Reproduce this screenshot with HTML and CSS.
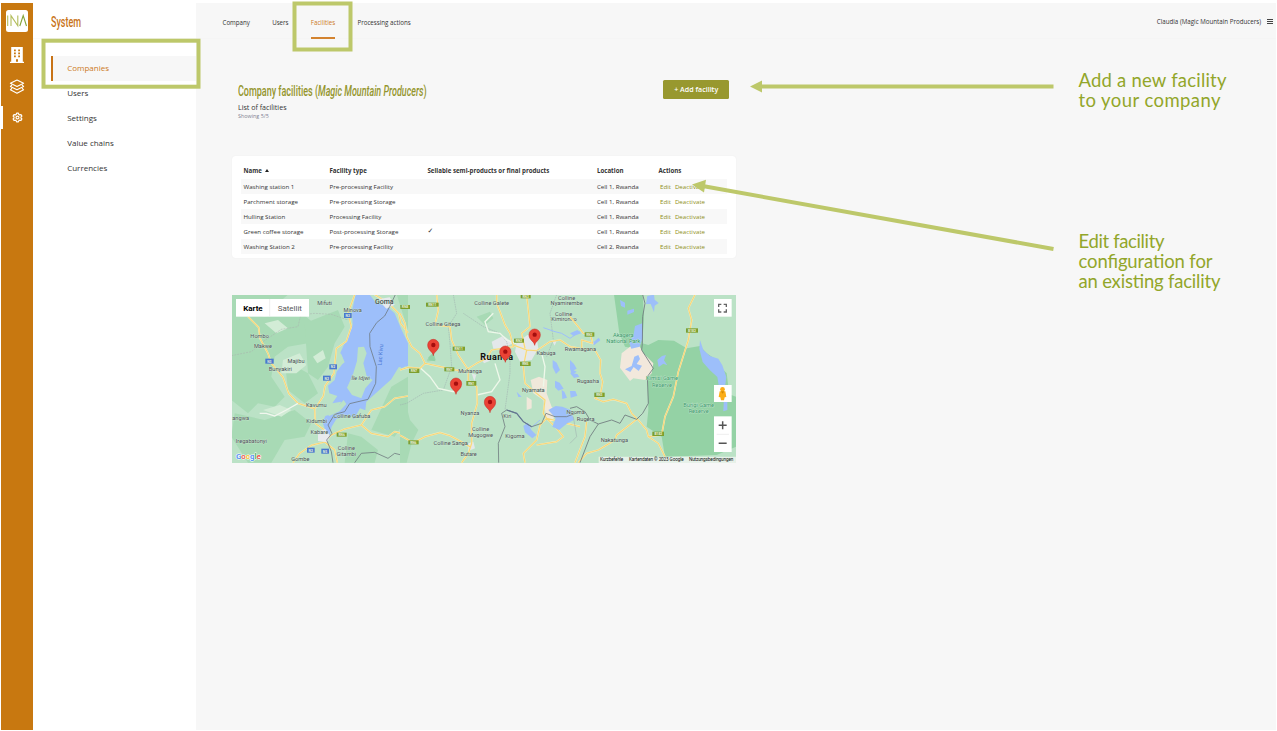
FILE: index.html
```
<!DOCTYPE html>
<html lang="en">
<head>
<meta charset="utf-8">
<title>Company facilities</title>
<link rel="stylesheet" href="styles.css">
</head>
<body>
<div class="app">
  <nav class="rail">
    <div class="logo"><svg viewBox="0 0 22 22" width="22" height="22" fill="none" stroke="#b3bd5c" stroke-width="1.1"><path d="M1.7 5.5V16M5 16V5.6L11.8 15.8V5.5"/><path d="M13.8 16L17.2 5.6L20.5 16" stroke="#82a43a"/></svg></div>
    <div class="rail-item"><svg viewBox="0 0 14 17" width="14" height="17"><path fill="#fff" fill-rule="evenodd" d="M1.2 0h11.6v14.8H14V16H0v-1.200h1.200zM4 2.500v1.700h1.800V2.500zM8.200 2.500v1.700H10V2.500zM4 5.500v1.700h1.800V5.500zM8.200 5.500v1.700H10V5.500zM4 8.500v1.700h1.800V8.500zM8.200 8.500v1.700H10V8.500zM6 12.200v2.600h2v-2.600z"/></svg></div>
    <div class="rail-item"><svg viewBox="0 0 16 16" width="16" height="16" fill="none" stroke="#fff" stroke-width="1.100" stroke-linejoin="round"><path d="M8 1L14.600 4.200L8 7.400L1.400 4.200ZM3 6L1.400 7.400L8 10.800L14.600 7.400L13 6M3 9.200L1.400 10.800L8 14.300L14.600 10.800L13 9.200"/></svg></div>
    <div class="rail-item active"><svg viewBox="0 0 12 12" width="11" height="11" fill="none" stroke="#fff" stroke-width="1.300" stroke-linejoin="round"><path d="M5 1.200h2l.4 1.400 1 .6 1.400-.4 1 1.700-1 1v1.100l1 1-1 1.700-1.400-.4-1 .6-.4 1.300H5l-.4-1.300-1-.6-1.400.4-1-1.700 1-1V5.500l-1-1 1-1.700 1.400.4 1-.6z"/><circle cx="6" cy="6" r="1.600"/></svg></div>
  </nav>
  <aside class="sidebar">
    <h2 class="side-title"><span>System</span></h2>
    <ul class="menu">
      <li class="current">Companies</li>
      <li>Users</li>
      <li>Settings</li>
      <li>Value chains</li>
      <li>Currencies</li>
    </ul>
  </aside>
  <main class="main">
    <header class="topbar">
      <div class="tabs"><span>Company</span><span>Users</span><span class="selected">Facilities</span><span>Processing actions</span></div>
      <div class="account"><span>Claudia (Magic Mountain Producers)</span><i class="burger"></i></div>
    </header>
    <section class="content">
      <div class="heading">
        <div>
          <h1>Company facilities (<em>Magic Mountain Producers</em>)</h1>
          <p class="subtitle">List of facilities</p>
          <p class="count">Showing 5/5</p>
        </div>
        <button class="add">+ Add facility</button>
      </div>
      <div class="card">
        <div class="row head"><span>Name <i class="sort"></i></span><span>Facility type</span><span>Sellable semi-products or final products</span><span>Location</span><span>Actions</span></div>
        <div class="row odd"><span>Washing station 1</span><span>Pre-processing Facility</span><span></span><span>Cell 1, Rwanda</span><span class="links"><a>Edit</a><a>Deactivate</a></span></div>
        <div class="row"><span>Parchment storage</span><span>Pre-processing Storage</span><span></span><span>Cell 1, Rwanda</span><span class="links"><a>Edit</a><a>Deactivate</a></span></div>
        <div class="row odd"><span>Hulling Station</span><span>Processing Facility</span><span></span><span>Cell 1, Rwanda</span><span class="links"><a>Edit</a><a>Deactivate</a></span></div>
        <div class="row"><span>Green coffee storage</span><span>Post-processing Storage</span><span class="tick">✓</span><span>Cell 1, Rwanda</span><span class="links"><a>Edit</a><a>Deactivate</a></span></div>
        <div class="row odd"><span>Washing Station 2</span><span>Pre-processing Facility</span><span></span><span>Cell 2, Rwanda</span><span class="links"><a>Edit</a><a>Deactivate</a></span></div>
      </div>
      <svg class="map" viewBox="232 295 504 168" width="504" height="168">
        <defs>
          <g id="pin"><path d="M0 0C-1-12-17-15-17-32a17 17 0 0 1 34 0C17-15 1-12 0 0Z" fill="#ea4335" stroke="#c5221f" stroke-width="1.500"/><circle cy="-32" r="6.500" fill="#a50e0e"/></g>
        </defs>
        <rect x="231" y="294" width="506" height="170" fill="#bbe2c6"/>
        <!-- west: Lake Kivu -->
        <g transform="translate(228 290) scale(.33333)">
          <g fill="#a8dab5">
            <path d="M10 60L110 80 210 60 270 110 240 160 180 170 140 200 130 260 170 320 140 350 90 340 60 370 10 330Z"/>
            <path d="M230 100L330 60 350 110 320 160 300 230 270 270 240 250ZM10 14H180L150 40 10 100ZM170 210L240 250 270 310 230 340 180 300ZM20 370L110 390 200 360 250 400 230 440 170 450 130 518H60L10 440ZM360 430L400 440 450 480 440 518H350Z"/>
            <path d="M490 290L540 260V380L500 440 430 420ZM505 10H540V120Z"/>
          </g>
          <g fill="#d2ecd6"><path d="M110 100l40-10 30 25-35 15zM165 210l50-20 20 35-30 25-45 0zM105 360l50-15 35 15-30 20zM255 200l30-20 8 25-25 15z"/></g>
          <path fill="#9dbffa" d="M383 14L372 62 374 105 352 155 337 188 348 215 326 245 320 270 300 287 304 310 328 318 313 340 340 335 322 368 292 378 284 398 292 420 304 438 311 410 325 387 365 373 378 388 396 355 412 361 415 335 450 304 490 268 512 232 540 228V160L520 118 500 70 478 50 444 38 425 14Z"/>
          <path fill="#bbe2c6" d="M390 172l18-2 8 20-10 30 10 38 18 12-22 25-12 30-28-10-15-22 18-40 12-40zM326 188l14 5 10 24-20 15-15-8zM297 370l25-12 25-28 8 12-20 22-32 14z"/>
          <path fill="none" stroke="#a7afad" stroke-width="1.500" stroke-dasharray="6 3" d="M10 197L70 185 105 155 160 118 210 110 218 75 260 70 310 73 360 90 372 60"/>
          <path class="road-case" d="M60 80L92 112 96 145 120 190 130 220 165 262 182 310 210 340 260 356 262 400 289 420 290 456 250 466 215 490 195 518M380 14L360 70 370 110 355 154 325 175 318 250 291 288 286 318 262 355M440 14L480 38 512 70 518 100 540 128M540 318L500 325 470 350 430 360 400 405 350 417 310 435 290 456 320 480 328 518M400 405L430 430 480 440 500 425 540 435"/>
          <path class="road-core" d="M60 80L92 112 96 145 120 190 130 220 165 262 182 310 210 340 260 356 262 400 289 420 290 456 250 466 215 490 195 518M380 14L360 70 370 110 355 154 325 175 318 250 291 288 286 318 262 355M440 14L480 38 512 70 518 100 540 128M540 318L500 325 470 350 430 360 400 405 350 417 310 435 290 456 320 480 328 518M400 405L430 430 480 440 500 425 540 435"/>
          <path fill="#e8eaed" d="M270 425l22-8 14 20-8 20-28-4zM450 28l35-6 15 22-25 12z"/>
          <path fill="none" stroke="#f1f6ee" stroke-width="4" d="M95 370L115 370 140 378 175 360 210 340"/>
          <path fill="none" stroke="#6d777c" stroke-width="2.300" d="M502 14L485 50 470 78 446 98 425 130 426 170 445 230 443 280 420 328 365 341 350 365 320 373 300 405 312 430 296 450 310 485 315 518M380 518L400 490 440 487 480 505 500 490 540 500"/>
          <g class="blue"><rect x="348" y="69" width="23" height="15"/><rect x="304" y="223" width="23" height="15"/><rect x="285" y="257" width="23" height="15"/><rect x="112" y="206" width="25" height="15"/><rect x="237" y="473" width="23" height="15"/><rect x="280" y="476" width="23" height="15"/></g>
          <g class="green"><rect x="326" y="428" width="30" height="12"/></g>
          <g class="shield"><text x="359" y="81">N2</text><text x="315" y="235">N2</text><text x="296" y="269">N2</text><text x="124" y="218">N3</text><text x="248" y="485">N2</text><text x="291" y="488">N5</text><text x="341" y="438">RN6</text></g>
          <g class="place"><text x="290" y="45">Mifuti</text><text x="374" y="65">Minova</text><text x="95" y="143">Hombo</text><text x="105" y="173">Makwe</text><text x="204" y="220">Majibu</text><text x="157" y="243">Bunyakiri</text><text x="398" y="270" font-style="italic">Île Idjwi</text><text x="265" y="352">Kavumu</text><text x="266" y="399">Kidumbi</text><text x="274" y="431">Kabare</text><text x="372" y="384">Colline Gafuba</text><text x="38" y="391">angwa</text><text x="70" y="460">Iregabatonyi</text><text x="355" y="480">Colline</text><text x="355" y="497">Gitambi</text><text x="217" y="513">Gombe</text><text x="469" y="43" class="town">Goma</text></g>
          <text class="water" transform="translate(463 195) rotate(-85)">Lac Kivu</text>
        </g>
        <!-- centre: Rwanda -->
        <g transform="translate(400 290) scale(.33333)">
          <path fill="#a8dab5" d="M0 340L20 350 30 390 55 420 35 460 20 518H0ZM80 210l20-20 8 20-25 5zM230 80l40-15 10 20-25 20z"/>
          <path fill="#95d3a7" d="M85 202l15-14 3 10 3 16-20-3z"/>
          <path fill="#9dbffa" d="M0 155L16 190 22 225 5 235 0 230Z"/>
          <path fill="#e4e8ea" d="M275 155l35-18 30 22-30 15-30 2zM350 160l32-25 28 10 5 30-20 35-35 5-15-30zM240 200l25 0 5 12-18 8zM215 250l14 4-6 20zM205 460l15-5 5 20-20 8zM455 150l14 5-5 12z"/>
          <path fill="#f0e8da" d="M392 270l25-10 25 10-2 40 15 40 10 10-5 30-20 0-10-60-30-20zM380 320l15 10 0 25-15 5z"/>
          <path fill="none" stroke="#9cabac" stroke-width="1.500" stroke-dasharray="5 2" d="M160 14L170 70 145 110 150 160 155 230 130 300 70 310 20 340 0 345M190 70L250 110 300 130 320 155 330 200 330 250 315 360M470 14L450 70 460 150 440 200"/>
          <path fill="none" stroke="#eef8ea" stroke-width="4" d="M62 235L90 260 115 295 160 305 185 285M230 315L275 305 300 270 285 220M350 162L320 150 300 130 265 125 255 95 280 70M425 190L435 230 430 290"/>
          <path class="road-case" d="M0 70L15 100 20 140 35 170 60 190 75 220 130 232 190 245 230 220 260 205 275 180 340 170 330 130 315 105 300 65 290 40 290 14M110 14L115 60 105 105 150 110 155 150 175 195 205 240 205 270 230 290 232 340 215 400 215 460 205 490 185 518M0 240L25 232 60 235 75 220M0 436L40 458 75 440 120 428 150 437 180 453 210 470M340 165L380 180 410 182 450 155 480 150 510 170 540 175M375 175L365 130 390 110 385 60 380 14M380 180L370 230 375 280 410 310 435 330 430 370 440 385M440 385L420 405 410 450 370 490 375 518M440 385L470 415 490 440 470 455 410 465M440 385L540 410"/>
          <path class="road-core" d="M0 70L15 100 20 140 35 170 60 190 75 220 130 232 190 245 230 220 260 205 275 180 340 170 330 130 315 105 300 65 290 40 290 14M110 14L115 60 105 105 150 110 155 150 175 195 205 240 205 270 230 290 232 340 215 400 215 460 205 490 185 518M0 240L25 232 60 235 75 220M0 436L40 458 75 440 120 428 150 437 180 453 210 470M340 165L380 180 410 182 450 155 480 150 510 170 540 175M375 175L365 130 390 110 385 60 380 14M380 180L370 230 375 280 410 310 435 330 430 370 440 385M440 385L420 405 410 450 370 490 375 518M440 385L470 415 490 440 470 455 410 465M440 385L540 410"/>
          <path fill="#9dbffa" d="M370 408l14-10 10 22 15 15-12 10-22-18zM445 360l22-12 20 2 25 10 10 30-20 10-25 20-20-10 10-25zM458 210l12 8 10 22-12 12-10-20zM465 272l14 6 12 18-16 6-10-10zM510 235l20 10-15 10zM485 300l8 5 8 18-14 4zM365 320l-15-15 5 16z"/>
          <path fill="none" stroke="#9dbffa" stroke-width="3" d="M430 113L465 125 485 130 510 145 540 125M395 412L420 390"/>
          <path fill="none" stroke="#5b75a8" stroke-width="3.500" d="M320 360L350 370 370 395 395 410"/>
          <path fill="none" stroke="#6d777c" stroke-width="2.300" d="M296 518L295 460 315 410 305 370 320 360 350 370 370 395 395 410 425 400 438 370 465 380 500 380 540 365"/>
          <g class="green"><rect x="1" y="45" width="29" height="12"/><rect x="78" y="38" width="38" height="12"/><rect x="158" y="170" width="37" height="12"/><rect x="362" y="13" width="30" height="12"/><rect x="342" y="146" width="30" height="12"/><rect x="360" y="215" width="32" height="13"/><rect x="27" y="236" width="31" height="13"/><rect x="133" y="232" width="30" height="12"/><rect x="199" y="273" width="30" height="14"/><rect x="25" y="451" width="31" height="12"/></g>
          <g class="shield"><text x="15" y="55">RN8</text><text x="97" y="48">RN11</text><text x="176" y="180">RN11</text><text x="377" y="24">RN3</text><text x="357" y="156">RN3</text><text x="376" y="225">RN5</text><text x="42" y="246">RN7</text><text x="148" y="242">RN7</text><text x="214" y="284">RN1</text><text x="40" y="461">RN6</text></g>
          <g class="place"><text x="275" y="45">Colline Galete</text><text x="500" y="29">Colline</text><text x="500" y="45">Nyamirembe</text><text x="491" y="77">Colline</text><text x="492" y="94">Kimironko</text><text x="129" y="109">Colline Gitega</text><text x="438" y="195">Kabuga</text><text x="210" y="248">Muhanga</text><text x="400" y="307">Nyamata</text><text x="210" y="376">Nyanza</text><text x="322" y="384">Kiri</text><text x="242" y="424">Colline</text><text x="242" y="440">Mugogwe</text><text x="345" y="445">Kigoma</text><text x="152" y="465">Colline Sanga</text><text x="206" y="497">Butare</text></g>
          <text x="290" y="210" class="country" textLength="98">Ruanda</text>
          <use href="#pin" x="100" y="197"/><use href="#pin" x="404" y="166"/><use href="#pin" x="316" y="217"/><use href="#pin" x="168" y="313"/><use href="#pin" x="270" y="368"/>
        </g>
        <!-- east: Akagera and reserves -->
        <g transform="translate(570 290) scale(.33333)">
          <path fill="#94d2a5" d="M132 14H218L222 80 217 160 235 165 265 150 312 152 350 175 390 168 410 190 440 210 450 230 470 250 475 290 470 310 498 320V470L440 495 285 500 275 440 230 410 235 360 232 250 215 180 165 170 148 130Z"/>
          <path fill="#f2e8dc" d="M155 190l25-20 25-8 15 28 30 30-5 30-20 20-35-5-10 8-30-40z"/>
          <path fill="#9dbffa" d="M195 108l22-8 2 40-10 30-25 6-8-22 14-15zM165 238l20-10 8-28 12-5 5 12-10 15 16 5-10 16-15-12-10 15zM150 30l15 8 0 15-12-5zM172 62l20-6 0 10-20 8zM232 18l20-4 2 15 12 10-12 8-2 20-10-25-14 0zM262 210l14-12 12-3-6 16 10 15-12-5-14 10zM390 150l10 30 20 18 25 8 12 20 12 35-4 30-18 0-5-30-22-20-22-25-10-40zM462 320l10 0 0 40-12 4z"/>
          <g fill="#9dbffa"><path d="M0 210l12 12 8 14-12 6-8-5zM0 248l22 4 6 8-16 4zM0 130l22-10 12 10-24 8zM60 155l12 0 14-12 5 8-18 14zM0 303l16 0 6 14-20 6z"/></g>
          <path class="road-case" d="M0 80L25 110 40 130 62 135 68 160 35 150 35 175 75 180 92 210 90 250 98 275 92 310 75 325 100 335 130 328 170 340 185 370 205 390 230 420 235 440 265 460 285 500M375 14L355 55 365 90 355 150 325 245 310 320 285 380 275 435 235 440M200 388L140 435 135 450 85 480 50 490 25 518M50 395L45 440 15 518"/>
          <path class="road-core" d="M0 80L25 110 40 130 62 135 68 160 35 150 35 175 75 180 92 210 90 250 98 275 92 310 75 325 100 335 130 328 170 340 185 370 205 390 230 420 235 440 265 460 285 500M375 14L355 55 365 90 355 150 325 245 310 320 285 380 275 435 235 440M200 388L140 435 135 450 85 480 50 490 25 518M50 395L45 440 15 518"/>
          <path fill="none" stroke="#6d777c" stroke-width="2.500" d="M218 14L225 40 218 80 217 160 215 180 250 235 232 260 235 340 218 370 200 388 165 375 150 400 125 390 85 402 60 440 30 518M85 402L60 390 45 365 20 350 0 355"/>
          <path fill="none" stroke="#9cabac" stroke-width="1.500" d="M10 380L20 440 0 460"/>
          <g class="green"><rect x="44" y="127" width="29" height="13"/><rect x="348" y="115" width="36" height="13"/><rect x="73" y="308" width="31" height="13"/><rect x="247" y="425" width="35" height="13"/></g>
          <g class="shield"><text x="58" y="138">RN3</text><text x="366" y="126">B182</text><text x="88" y="319">RN3</text><text x="265" y="436">B182</text></g>
          <g class="place"><text x="31" y="184">Rwamagana</text><text x="54" y="279">Rugasha</text><text x="17" y="371">Ngoma</text><text x="47" y="392">Rugera</text><text x="133" y="457">Nakatunga</text></g>
          <g class="park"><text x="160" y="142">Akagera</text><text x="160" y="160">National Park</text><text x="276" y="271">Kimisi Game</text><text x="276" y="290">Reserve</text><text x="386" y="352">Burigi Game</text><text x="386" y="370">Reserve</text></g>
          <path fill="#eef3ef" opacity=".85" d="M86 500H498V519H86Z"/>
          <g class="legal"><text x="90" y="514" textLength="70">Kurzbefehle</text><text x="177" y="514" textLength="164">Kartendaten © 2023 Google</text><text x="357" y="514" textLength="133">Nutzungsbedingungen</text></g>
          <g fill="#fff"><rect x="432" y="27" width="53" height="53"/><rect x="432" y="285" width="53" height="51"/><rect x="432" y="379" width="53" height="107"/></g>
          <path fill="none" stroke="#666" stroke-width="4" d="M446 51V43H454M461 43H469V51M469 58V66H461M454 66H446V58"/>
          <path fill="none" stroke="#555" stroke-width="4.500" d="M446 406H470M458 394V418M446 460H470"/>
          <path stroke="#e6e6e6" stroke-width="2" d="M440 433H477"/>
          <path fill="#fbad18" d="M449 304h17l3 17-5 1-2 9h-9l-2-9-5-1z"/><circle cx="457.500" cy="298" r="7" fill="#fbad18"/><path d="M452 304h11l-5 7z" fill="#d68a00"/>
        </g>
        <!-- controls -->
        <g transform="translate(228 290) scale(.33333)">
          <rect x="24" y="27" width="219" height="53" fill="#fff"/><path stroke="#e6e6e6" stroke-width="2" d="M125 27V80"/>
          <text class="maptype" x="46" y="62" font-weight="700" fill="#000" textLength="58">Karte</text><text class="maptype" x="149" y="62" fill="#565656" textLength="73">Satellit</text>
          <text x="24" y="508" class="google" textLength="74"><tspan fill="#4285f4">G</tspan><tspan fill="#ea4335">o</tspan><tspan fill="#fbbc05">o</tspan><tspan fill="#4285f4">g</tspan><tspan fill="#34a853">l</tspan><tspan fill="#ea4335">e</tspan></text>
        </g>
      </svg>
    </section>
  </main>
</div>
<svg class="annotations" viewBox="0 0 1277 731" width="1277" height="731">
  <g fill="none" stroke="#bdc86a" stroke-width="4"><rect x="43.500" y="40.700" width="155" height="46"/><rect x="294.500" y="3.500" width="56" height="46"/><path d="M760 86.500H1053.500M704 186.300L1053.500 249"/></g>
  <path fill="#bdc86a" d="M750 86.500L762 80.500V92.500ZM692 184.500L706 179.800 704 192.600Z"/>
  <g class="callout"><text x="1078.500" y="87" textLength="148">Add a new facility</text><text x="1078.500" y="107" textLength="142">to your company</text><text x="1078.500" y="248" textLength="86">Edit facility</text><text x="1078.500" y="268" textLength="134">configuration for</text><text x="1078.500" y="288" textLength="142">an existing facility</text></g>
</svg>
</body>
</html>
```
FILE: styles.css
```
* { box-sizing: border-box; }
body { margin: 0; background: #fff; font-family: "Open Sans", sans-serif; color: #333; overflow: hidden; }
h1, h2, p, ul { margin: 0; padding: 0; }
.app { display: flex; height: 731px; padding: 3px 1px 1px 1.400px; }

.rail { width: 32px; background: #c87810; display: flex; flex-direction: column; align-items: center; }
.logo { width: 22px; height: 22px; margin: 7px 0 7px; background: #fff; border-radius: 2.500px; }
.logo svg { display: block; }
.rail-item { width: 100%; height: 32px; display: flex; align-items: center; justify-content: center; }
.rail-item.active { height: 23px; margin-top: 3px; border-left: 2.500px solid #fff; padding-right: 1px; }

.sidebar { width: 162.600px; background: #fff; }
.side-title { height: 36px; padding: 9px 0 0 17.500px; border-bottom: 1px solid #fafafa; font: 500 14px/20px Roboto, sans-serif; color: #c87316; }
.side-title span { display: inline-block; transform: scaleX(.64); transform-origin: left; }
.menu { list-style: none; padding: 17px 0 0 17.600px; font-size: 8px; line-height: 24.900px; }
.menu li { height: 24.900px; padding-left: 16.200px; }
.menu .current { background: #f7f7f7; border-left: 2px solid #c87316; padding-left: 14.200px; color: #cc7a24; }

.main { flex: 1; min-width: 0; background: #f7f7f7; }
.topbar { height: 36px; display: flex; justify-content: space-between; padding: 0 3px 0 26.500px; border-bottom: 1px solid #f5f5f5; font-size: 6.200px; line-height: 39px; }
.tabs { display: flex; gap: 22.200px; }
.tabs .selected { color: #cc7a24; border-bottom: 2px solid #d3832f; height: 36px; }
.account { display: flex; align-items: center; gap: 6px; height: 37px; }
.burger { width: 6px; height: 5px; border-top: 1px solid #444; border-bottom: 1px solid #444; background: linear-gradient(#444, #444) center / 100% 1px no-repeat; }

.content { width: 540px; padding: 41px 0 0 36px; }
.heading { display: flex; justify-content: space-between; height: 76px; padding: 0 6.500px 0 6px; width: 504px; }
h1 { font: 500 14.500px/20px Roboto, sans-serif; color: #94952d; white-space: nowrap; transform: scaleX(.62); transform-origin: left; width: 270px; padding-top: 2px; }
.subtitle { font-size: 7.100px; line-height: 10px; margin-top: 0; }
.count { font-size: 5.400px; line-height: 9px; color: #7f7f92; }
.add { width: 66.500px; height: 19px; border: 0; border-radius: 1.500px; background: #98982f; color: #fff; font: 600 7.100px/19px "Open Sans", sans-serif; padding: 0; }

.card { width: 504px; height: 102px; padding: 6px 9px 0 9px; background: #fff; border-radius: 4px; box-shadow: 0 0 2px #eee; }
.row { display: grid; grid-template-columns: 86px 98px 169.500px 61.500px 1fr; align-items: center; height: 15px; padding: 0 0 1px 2.500px; font-size: 6.150px; white-space: nowrap; }
.row.head { height: 17px; font-weight: 700; }
.row.odd { background: #f8f8f8; }
.sort { display: inline-block; border: 2.500px solid transparent; border-top: 0; border-bottom: 3px solid #222; margin-left: 2px; vertical-align: 1px; }
.links { color: #8f9020; font-weight: 500; display: flex; gap: 4px; padding-left: 1.500px; }
.tick { font: 700 7px/8px "DejaVu Sans", sans-serif; }

.map { display: block; margin-top: 37px; font-family: Roboto, sans-serif; }
.map text { stroke-linejoin: round; }
.blue { fill: #4a78cf; }
.green { fill: #7d9f2e; }
.shield { fill: #e8f0dc; font-size: 10px; font-weight: 700; text-anchor: middle; }
.place { fill: #464d50; font-size: 17px; text-anchor: middle; stroke: #d9efdf; stroke-width: 1.500px; paint-order: stroke; }
.place .town { font-size: 21px; font-weight: 500; }
.park { fill: #329565; font-size: 17px; text-anchor: middle; stroke: #d0ecd8; stroke-width: 2px; paint-order: stroke; }
.water { fill: #4b79d6; font-size: 17px; text-anchor: middle; }
.country { font-size: 27px; font-weight: 700; text-anchor: middle; fill: #111; }
.legal { font-size: 14px; fill: #111; }
.maptype { font-size: 24px; }
.google { font-size: 24px; font-weight: 500; stroke: #fff; stroke-width: 3px; paint-order: stroke; }
.road-case, .road-core { fill: none; stroke-linejoin: round; }
.road-case { stroke: #f6eec0; stroke-width: 5px; }
.road-core { stroke: #f8d677; stroke-width: 3.200px; }

.annotations { position: absolute; left: 0; top: 0; pointer-events: none; }
.callout { font-family: Lato, sans-serif; font-size: 18.500px; fill: #92a62a; }
```
